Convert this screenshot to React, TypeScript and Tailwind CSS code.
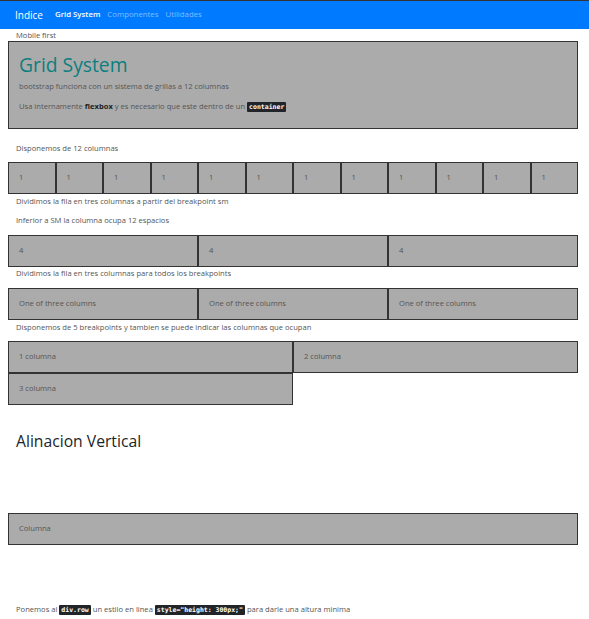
import React from "react";

const txt = "text-[7.6px] leading-[12px] text-[#555]";

function Col({ label, className = "" }: { label: string; className?: string }) {
  return (
    <div className={"h-[32px] border border-[#333] bg-[#ababab] pl-[10px] flex items-center text-[7.6px] text-[#555] " + className}>
      {label}
    </div>
  );
}

function Kbd({ children }: { children: React.ReactNode }) {
  return (
    <span className="bg-[#212529] text-white font-bold px-[2px] py-[1px] text-[6.5px] rounded-[1px]" style={{ fontFamily: "'DejaVu Sans Mono', monospace" }}>
      {children}
    </span>
  );
}

export default function App() {
  const twelve = Array.from({ length: 12 }, () => "1");
  return (
    <div className="w-[589px] h-[619px] bg-white overflow-hidden" style={{ fontFamily: "'Open Sans', 'Noto Sans', sans-serif" }}>
      {/* navbar */}
      <nav className="border-t border-[#333] bg-[#007bff] h-[29px] flex items-center pl-[15px]">
        <span className="text-white text-[10px] mr-[12px]">Indice</span>
        <span className="text-white text-[7.8px] font-semibold mr-[7px]">Grid System</span>
        <span className="text-[#80bdff] text-[7.8px] mr-[7px]">Componentes</span>
        <span className="text-[#80bdff] text-[7.8px]">Utilidades</span>
      </nav>

      <div className="pl-[8px] w-[578px]">
        <p className={txt + " pl-[8px]"}>Mobile first</p>

        {/* jumbotron */}
        <div className="h-[88px] border border-[#333] bg-[#ababab] pt-[11px] pl-[10px]">
          <h1 className="text-[19.3px] leading-[24px] text-[#0b7f7f]">Grid System</h1>
          <p className={txt + " mt-[3px]"}>bootstrap funciona con un sistema de grillas a 12 columnas</p>
          <p className={txt + " mt-[8px]"}>
            Usa internamente <b className="text-[#222]">flexbox</b> y es necesario que este dentro de un <Kbd>container</Kbd>
          </p>
        </div>

        <p className={txt + " pl-[8px] mt-[13px]"}>Disponemos de 12 columnas</p>
        <div className="grid grid-cols-12 mt-[8px]">
          {twelve.map((n, i) => (
            <Col key={i} label={n} />
          ))}
        </div>
        <p className={txt + " pl-[8px] mt-[1px]"}>Dividimos la fila en tres columnas a partir del breakpoint sm</p>
        <p className={txt + " pl-[8px] mt-[7px]"}>Inferior a SM la columna ocupa 12 espacios</p>
        <div className="grid grid-cols-3 mt-[9px]">
          <Col label="4" />
          <Col label="4" />
          <Col label="4" />
        </div>
        <p className={txt + " pl-[8px]"}>Dividimos la fila en tres columnas para todos los breakpoints</p>
        <div className="grid grid-cols-3 mt-[9px]">
          <Col label="One of three columns" />
          <Col label="One of three columns" />
          <Col label="One of three columns" />
        </div>
        <p className={txt + " pl-[8px] mt-[1px]"}>Disponemos de 5 breakpoints y tambien se puede indicar las columnas que ocupan</p>
        <div className="grid grid-cols-2 mt-[8px]">
          <Col label="1 columna" />
          <Col label="2 columna" />
          <Col label="3 columna" />
        </div>

        <h2 className="text-[15.7px] leading-[20px] text-[#212529] pl-[8px] mt-[26px] font-medium">Alinacion Vertical</h2>

        <div className="h-[148px] mt-[4px] flex items-center">
          <Col label="Columna" className="w-full" />
        </div>

        <p className={txt + " pl-[8px]"}>
          Ponemos al <Kbd>div.row</Kbd> un estilo en linea <Kbd>style="height: 300px;"</Kbd> para darle una altura minima
        </p>
      </div>
    </div>
  );
}
